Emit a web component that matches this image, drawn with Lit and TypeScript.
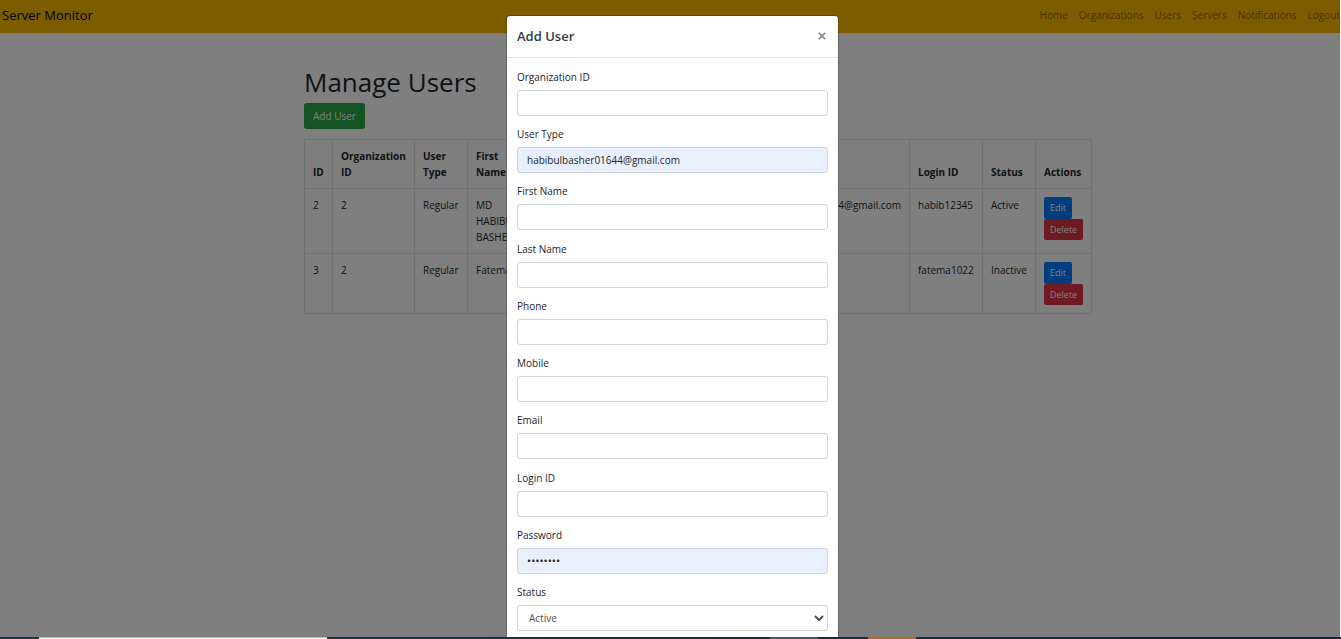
import { LitElement, html, css } from "lit";
import { customElement, state } from "lit/decorators.js";

interface User {
  id: number;
  org: number;
  type: string;
  first: string;
  last: string;
  phone: string;
  mobile: string;
  email: string;
  login: string;
  status: string;
}

interface Field {
  id: string;
  label: string;
  type: string;
  value?: string;
}

const LINKS = ["Home", "Organizations", "Users", "Servers", "Notifications", "Logout"];

const USERS: User[] = [
  { id: 2, org: 2, type: "Regular", first: "MD HABIBUL BASHER", last: "", phone: "", mobile: "", email: "habibulbasher01644@gmail.com", login: "habib12345", status: "Active" },
  { id: 3, org: 2, type: "Regular", first: "Fatema", last: "", phone: "", mobile: "", email: "", login: "fatema1022", status: "Inactive" },
];

const FIELDS: Field[] = [
  { id: "organization", label: "Organization ID", type: "text" },
  { id: "user-type", label: "User Type", type: "text", value: "habibulbasher01644@gmail.com" },
  { id: "first-name", label: "First Name", type: "text" },
  { id: "last-name", label: "Last Name", type: "text" },
  { id: "phone", label: "Phone", type: "text" },
  { id: "mobile", label: "Mobile", type: "text" },
  { id: "email", label: "Email", type: "email" },
  { id: "login", label: "Login ID", type: "text" },
  { id: "password", label: "Password", type: "password", value: "password" },
];

@customElement("app-root")
export class AppRoot extends LitElement {
  @state() private open = true;

  static styles = css`
    :host {
      display: grid;
      grid-template-rows: minmax(0, 1fr) 2px;
      height: 100vh;
      overflow: hidden;
      background: #f0f0f0;
      color: #212529;
      font: 10px/16px "Segoe UI", "Open Sans", "Noto Sans", sans-serif;
    }
    * {
      box-sizing: border-box;
    }
    button, input, select {
      font: inherit;
    }
    .page {
      position: relative;
      margin-right: 1px;
      overflow: hidden;
      background: #fff;
    }
    .navbar {
      display: flex;
      justify-content: space-between;
      align-items: center;
      height: 33px;
      padding: 0 0 3px 2px;
      background: #fbb800;
    }
    .brand {
      color: #000;
      font-size: 13px;
      text-decoration: none;
    }
    .links {
      display: flex;
      gap: 11px;
      margin: 0;
      padding: 0;
      list-style: none;
    }
    .links a {
      color: rgba(0, 0, 0, 0.5);
      text-decoration: none;
    }
    .container {
      width: 732px;
      max-width: 100%;
      margin: 0 auto;
      padding-top: 33px;
    }
    h1 {
      margin: 0 0 5px;
      font-size: 26px;
      line-height: 32px;
      font-weight: 500;
    }
    .btn {
      display: block;
      border: 0;
      border-radius: 3px;
      color: #fff;
      cursor: pointer;
    }
    .add {
      height: 26px;
      padding: 0 9px;
      background: #28a745;
    }
    .edit, .delete {
      height: 22px;
      padding: 0 6px;
      border-radius: 2px;
      font-size: 9px;
    }
    .edit {
      background: #007bff;
    }
    .delete {
      height: 21px;
      background: #dc3545;
    }
    table {
      width: 787px;
      margin-top: 10px;
      border-collapse: collapse;
      table-layout: fixed;
    }
    th, td {
      padding: 8px;
      border: 1px solid #dee2e6;
      text-align: left;
      vertical-align: top;
    }
    th {
      vertical-align: bottom;
      font-weight: 700;
    }
    .c-id { width: 28px; }
    .c-org { width: 82px; }
    .c-type { width: 53px; }
    .c-first { width: 62px; }
    .c-last { width: 70px; }
    .c-phone { width: 70px; }
    .c-mobile { width: 70px; }
    .c-email { width: 170px; }
    .c-login { width: 73px; }
    .c-status { width: 53px; }
    .c-actions { width: 56px; }
    .backdrop {
      position: absolute;
      inset: 0;
      display: flex;
      justify-content: center;
      padding: 16px 0 0 5px;
      background: rgba(0, 0, 0, 0.5);
    }
    .modal {
      display: flex;
      flex-direction: column;
      width: 331px;
      max-width: 100%;
      border-radius: 3px 3px 0 0;
      background: #fff;
      box-shadow: 0 0 0 1px rgba(0, 0, 0, 0.2);
    }
    .modal-head {
      display: flex;
      justify-content: space-between;
      align-items: center;
      height: 42px;
      padding: 0 10px 2px;
      border-bottom: 1px solid #dee2e6;
    }
    h2 {
      margin: 0;
      font-size: 13px;
      font-weight: 600;
      color: #343a40;
    }
    .close {
      display: flex;
      padding: 2px;
      border: 0;
      background: none;
      color: #7f7f7f;
      cursor: pointer;
    }
    .form {
      flex: 1;
      display: flex;
      flex-direction: column;
      justify-content: space-between;
      padding: 11px 10px 6px;
    }
    .group {
      display: grid;
      gap: 5px;
    }
    .control {
      width: 100%;
      height: 26px;
      padding: 0 9px;
      border: 1px solid #ced4da;
      border-radius: 3px;
      background: #fff;
      color: #212529;
    }
    .control[type="password"] {
      font-size: 11px;
    }
    .filled {
      background: #e8f0fe;
    }
    .select {
      position: relative;
      display: grid;
    }
    select.control {
      appearance: none;
      padding: 0 11px;
      color: #495057;
    }
    .chevron {
      position: absolute;
      right: 4px;
      top: 9px;
      pointer-events: none;
    }
    .taskbar {
      display: grid;
      grid-template-columns: 39px 288px 443px 48px 50px 48px 1fr;
      background: linear-gradient(90deg, #1f3441, #1b2b3f 60%, #18223f);
    }
    .window {
      grid-column: 2;
      border-top: 1px solid #bbb;
      background: #f8f8f8;
    }
    .task {
      grid-column: 4;
      background: #4b5666;
    }
    .alert {
      grid-column: 6;
      background: #b9662b;
    }
  `;

  private close() {
    this.open = false;
  }

  private show() {
    this.open = true;
  }

  private renderRow(u: User) {
    return html`<tr>
      <td>${u.id}</td><td>${u.org}</td><td>${u.type}</td><td>${u.first}</td>
      <td>${u.last}</td><td>${u.phone}</td><td>${u.mobile}</td><td>${u.email}</td>
      <td>${u.login}</td><td>${u.status}</td>
      <td>
        <button class="btn edit">Edit</button>
        <button class="btn delete">Delete</button>
      </td>
    </tr>`;
  }

  private renderModal() {
    return html`<div class="backdrop">
      <div class="modal" role="dialog" aria-labelledby="title">
        <div class="modal-head">
          <h2 id="title">Add User</h2>
          <button class="close" aria-label="Close" @click=${this.close}>
            <svg width="8" height="8" viewBox="0 0 8 8" fill="none" stroke="currentColor" stroke-width="1.6">
              <path d="M0.8 0.8L7.2 7.2M7.2 0.8L0.8 7.2" />
            </svg>
          </button>
        </div>
        <form class="form">
          ${FIELDS.map((f) => html`<div class="group">
            <label for=${f.id}>${f.label}</label>
            <input id=${f.id} class="control ${f.value ? "filled" : ""}" type=${f.type} autocomplete="off" .value=${f.value ?? ""} />
          </div>`)}
          <div class="group">
            <label for="status">Status</label>
            <div class="select">
              <select id="status" class="control">
                <option>Active</option>
                <option>Inactive</option>
              </select>
              <svg class="chevron" width="10" height="8" viewBox="0 0 10 8" fill="none" stroke="#495057" stroke-width="2">
                <path d="M1 2L5 6L9 2" />
              </svg>
            </div>
          </div>
        </form>
      </div>
    </div>`;
  }

  render() {
    return html`
      <div class="page">
        <nav class="navbar">
          <a class="brand" href="#">Server Monitor</a>
          <ul class="links">
            ${LINKS.map((l) => html`<li><a href="#">${l}</a></li>`)}
          </ul>
        </nav>
        <main class="container">
          <h1>Manage Users</h1>
          <button class="btn add" @click=${this.show}>Add User</button>
          <table>
            <colgroup>
              <col class="c-id" /><col class="c-org" /><col class="c-type" /><col class="c-first" />
              <col class="c-last" /><col class="c-phone" /><col class="c-mobile" /><col class="c-email" />
              <col class="c-login" /><col class="c-status" /><col class="c-actions" />
            </colgroup>
            <thead>
              <tr>
                <th>ID</th><th>Organization ID</th><th>User Type</th><th>First Name</th>
                <th>Last Name</th><th>Phone</th><th>Mobile</th><th>Email</th>
                <th>Login ID</th><th>Status</th><th>Actions</th>
              </tr>
            </thead>
            <tbody>${USERS.map((u) => this.renderRow(u))}</tbody>
          </table>
        </main>
        ${this.open ? this.renderModal() : ""}
      </div>
      <div class="taskbar">
        <div class="window"></div>
        <div class="task"></div>
        <div class="alert"></div>
      </div>
    `;
  }
}
